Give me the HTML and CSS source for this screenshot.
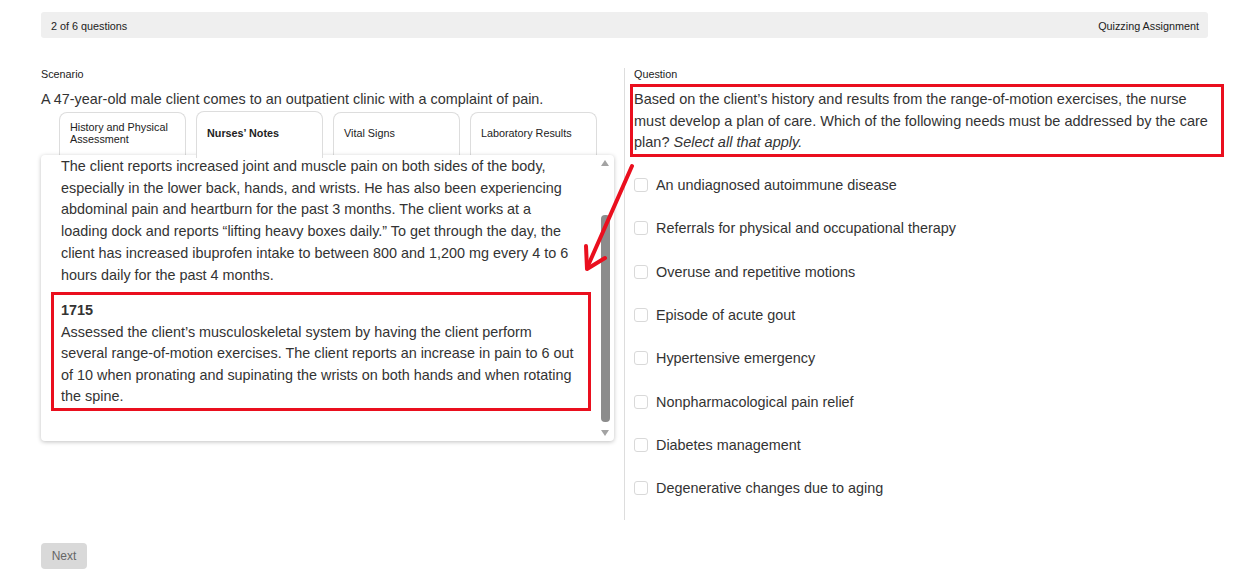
FILE: index.html
```html
<!DOCTYPE html>
<html lang="en">
<head>
<meta charset="utf-8">
<title>Quizzing Assignment</title>
<link rel="stylesheet" href="styles.css">
</head>
<body>
<div class="page">
  <div class="topbar">
    <span>2 of 6 questions</span>
    <span>Quizzing Assignment</span>
  </div>

  <div class="columns">
    <section class="scenario">
      <div class="label">Scenario</div>
      <p class="scenario-text">A 47-year-old male client comes to an outpatient clinic with a complaint of pain.</p>
      <div class="tabs">
        <div class="tab">History and Physical Assessment</div>
        <div class="tab active">Nurses’ Notes</div>
        <div class="tab">Vital Signs</div>
        <div class="tab">Laboratory Results</div>
      </div>
      <div class="panel">
        <div class="panel-body">
          <p class="note">The client reports increased joint and muscle pain on both sides of the body, especially in the lower back, hands, and wrists. He has also been experiencing abdominal pain and heartburn for the past 3 months. The client works at a loading dock and reports “lifting heavy boxes daily.” To get through the day, the client has increased ibuprofen intake to between 800 and 1,200 mg every 4 to 6 hours daily for the past 4 months.</p>
          <div class="note-box">
            <div class="note-time">1715</div>
            <p class="note">Assessed the client’s musculoskeletal system by having the client perform several range-of-motion exercises. The client reports an increase in pain to 6 out of 10 when pronating and supinating the wrists on both hands and when rotating the spine.</p>
          </div>
        </div>
        <div class="scrollbar">
          <span class="arrow-up"></span>
          <span class="thumb"></span>
          <span class="arrow-down"></span>
        </div>
      </div>
    </section>

    <section class="question">
      <div class="label">Question</div>
      <p class="question-box">Based on the client’s history and results from the range-of-motion exercises, the nurse must develop a plan of care. Which of the following needs must be addressed by the care plan? <em>Select all that apply.</em></p>
      <ul class="options">
        <li class="option"><span class="check"></span>An undiagnosed autoimmune disease</li>
        <li class="option"><span class="check"></span>Referrals for physical and occupational therapy</li>
        <li class="option"><span class="check"></span>Overuse and repetitive motions</li>
        <li class="option"><span class="check"></span>Episode of acute gout</li>
        <li class="option"><span class="check"></span>Hypertensive emergency</li>
        <li class="option"><span class="check"></span>Nonpharmacological pain relief</li>
        <li class="option"><span class="check"></span>Diabetes management</li>
        <li class="option"><span class="check"></span>Degenerative changes due to aging</li>
      </ul>
    </section>
  </div>

  <button class="next" type="button">Next</button>
</div>

<svg class="annotation" width="1254" height="576" viewBox="0 0 1254 576" aria-hidden="true">
  <path d="M632 166 L587 268" fill="none" stroke="#ea0f1e" stroke-width="4" stroke-linecap="round"/>
  <path d="M586 246 L587 269 L605 258" fill="none" stroke="#ea0f1e" stroke-width="4" stroke-linecap="round" stroke-linejoin="round"/>
</svg>
</body>
</html>
```

FILE: styles.css
```css
* { box-sizing: border-box; }

html, body {
  margin: 0;
  padding: 0;
  background: #fff;
}

body {
  font-family: "Liberation Sans", Arial, sans-serif;
  color: #333;
  position: relative;
  width: 1254px;
  height: 576px;
  overflow: hidden;
}

.page {
  padding: 12px 46px 0 41px;
}

.topbar {
  height: 26px;
  background: #efefef;
  border-radius: 3px;
  display: flex;
  justify-content: space-between;
  align-items: center;
  padding: 1px 9px 0 10px;
  font-size: 10.8px;
  color: #222;
}

.columns {
  display: flex;
  margin-top: 30px;
}

.label {
  font-size: 10.8px;
  line-height: 13px;
  color: #222;
}

.scenario {
  width: 572px;
  flex: none;
}

.scenario-text {
  margin: 10px 0 0;
  font-size: 14.4px;
  line-height: 17px;
  color: #333;
}

.tabs {
  display: flex;
  gap: 10px;
  margin: 3px 0 -3px 18px;
  align-items: flex-start;
  height: 47px;
}

.tab {
  width: 127px;
  height: 43px;
  margin-top: 1px;
  border: 1px solid #ddd;
  border-bottom: none;
  border-radius: 8px 8px 0 0;
  background: #fff;
  font-size: 10.8px;
  line-height: 12px;
  color: #222;
  padding: 0 12px 2px 10px;
  display: flex;
  align-items: center;
}

.tab.active {
  height: 47px;
  margin-top: 0;
  font-weight: bold;
  position: relative;
  z-index: 2;
  padding-bottom: 5px;
}

.panel {
  position: relative;
  z-index: 1;
  height: 286px;
  width: 573px;
  background: #fff;
  border-radius: 4px;
  box-shadow: 0 1px 4px rgba(0, 0, 0, 0.25);
  display: flex;
  overflow: hidden;
}

.panel-body {
  flex: 1;
  padding: 1px 22px 0 20px;
  overflow: hidden;
}

.note {
  margin: 0;
  font-size: 14.4px;
  line-height: 21.7px;
  color: #333;
}

.note-box {
  margin: 6px -14px 0 -10px;
  border: 3px solid #ea0f1e;
  padding: 5px 8px 0 7px;
}

.note-box .note {
  line-height: 21.5px;
}

.note-time {
  font-size: 14.4px;
  line-height: 21.5px;
  font-weight: bold;
  color: #333;
}

.scrollbar {
  width: 15px;
  flex: none;
  display: flex;
  flex-direction: column;
  align-items: center;
  padding: 5px 3px 5px 0;
}

.arrow-up, .arrow-down {
  width: 0;
  height: 0;
  border-left: 4.5px solid transparent;
  border-right: 4.5px solid transparent;
}

.arrow-up {
  border-bottom: 6px solid #a3a3a3;
}

.arrow-down {
  border-top: 6px solid #a3a3a3;
  margin-top: 8px;
}

.thumb {
  width: 9px;
  height: 207px;
  margin-top: 49px;
  background: #8c8c8c;
  border-radius: 4px;
}

.question {
  flex: 1;
  margin-left: 11px;
  border-left: 1px solid #ddd;
  padding: 0 0 10px 9px;
  height: 452px;
}

.question-box {
  margin: 3px -16px 0 -4px;
  border: 3px solid #ea0f1e;
  padding: 2px 13px 0 1px;
  font-size: 14.5px;
  line-height: 21.5px;
  color: #333;
}

.question-box em {
  font-style: italic;
}

.options {
  list-style: none;
  margin: 7px 0 0;
  padding: 0;
}

.option {
  height: 43.33px;
  display: flex;
  align-items: center;
  font-size: 14.4px;
  color: #333;
}

.check {
  width: 14px;
  height: 14px;
  border: 1px solid #d9d9d9;
  border-radius: 3px;
  margin-right: 8px;
  flex: none;
}

.next {
  margin-top: 23px;
  width: 46px;
  height: 26px;
  border: none;
  border-radius: 4px;
  background: #d9d9d9;
  color: #666;
  font-family: "Liberation Sans", Arial, sans-serif;
  font-size: 12px;
  padding: 0;
}

.annotation {
  position: absolute;
  top: 0;
  left: 0;
  pointer-events: none;
  z-index: 5;
}
```
